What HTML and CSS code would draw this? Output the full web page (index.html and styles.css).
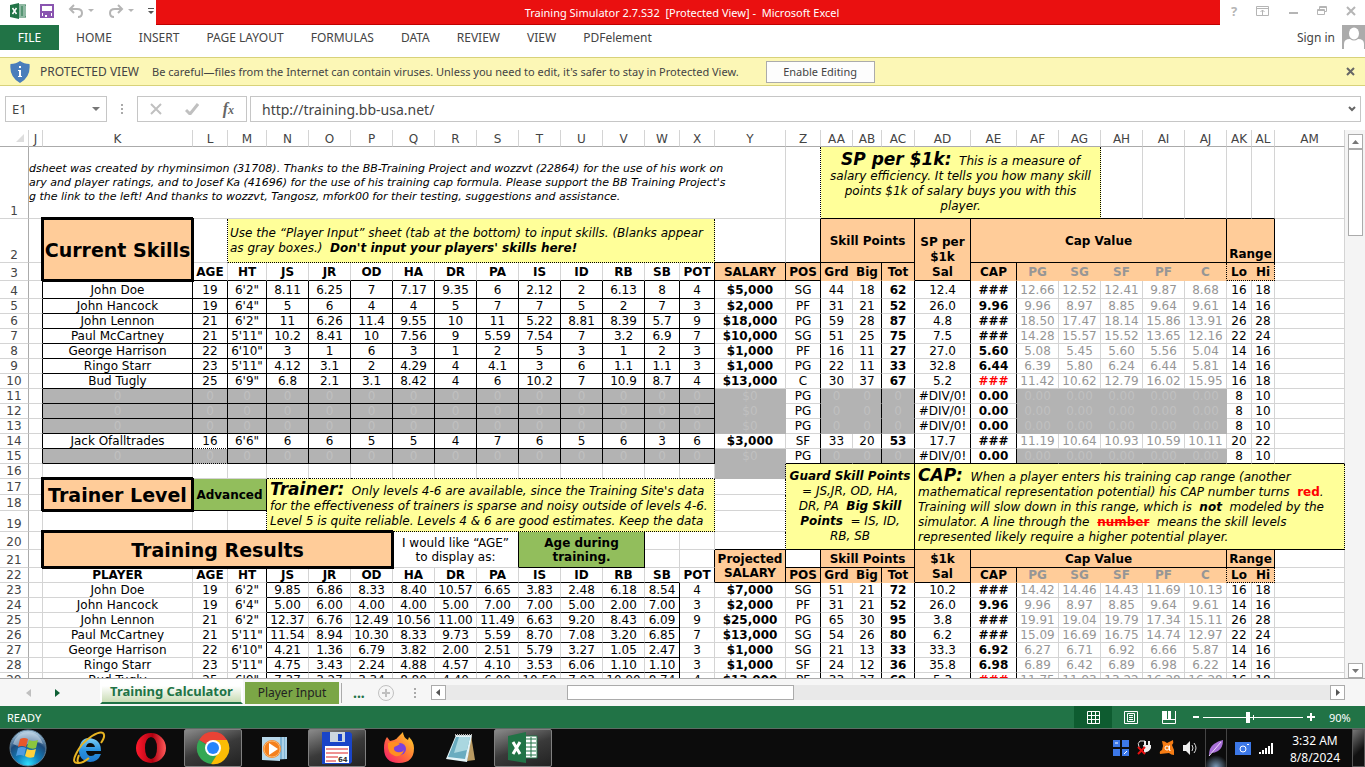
FILE: index.html
```html
<!DOCTYPE html>
<html lang="en">
<head>
    <meta charset="utf-8">
    <title>Training Simulator 2.7.S32 [Protected View] - Microsoft Excel</title>
    <link rel="stylesheet" href="styles.css">
</head>
<body>
<header class="title_bar">
    <div class="quick_access">
        <svg class="app_icon" width="16" height="16" viewBox="0 0 16 16"><path d="M8 2h8v12H8z" fill="#fff" stroke="#217346"/><path d="M9 4h6M9 6h6M9 8h6M9 10h6M9 12h6M12 3v10" stroke="#217346"/><path d="M0 2l9-2v16l-9-2z" fill="#217346"/><path d="M2.500 5l4 6M6.500 5l-4 6" stroke="#fff" stroke-width="1.500"/></svg>
        <button type="button" aria-label="Save"><svg width="14" height="14" viewBox="0 0 14 14"><path d="M1 1h12v12H1z" fill="none" stroke="#8a55b0" stroke-width="2"/><path d="M2 7h10v2H2zM3 9h8v4H3z" fill="#8a55b0"/><path d="M5 11h2v2H5z" fill="#fff"/></svg></button>
        <button type="button" class="undo" aria-label="Undo"><svg width="26" height="14" viewBox="0 0 26 14"><path d="M6 1L2 5l4 4M2 5h7q5 0 5 4t-4 4" fill="none" stroke="#b5b5b5" stroke-width="2"/><path d="M20 5h6l-3 3z" fill="#b5b5b5"/></svg></button>
        <button type="button" class="redo" aria-label="Redo"><svg width="26" height="14" viewBox="0 0 26 14"><path d="M10 1l4 4-4 4M14 5H7q-5 0-5 4t4 4" fill="none" stroke="#b5b5b5" stroke-width="2"/><path d="M20 5h6l-3 3z" fill="#b5b5b5"/></svg></button>
        <button type="button" class="customize" aria-label="Customize toolbar"><svg width="6" height="8" viewBox="0 0 6 8"><path d="M0 1h6v1H0zM0 4h6L3 7z" fill="#555"/></svg></button>
    </div>
    <div class="title">Training Simulator 2.7.S32&nbsp; [Protected View] -&nbsp; Microsoft Excel</div>
    <div class="window_buttons">
        <button type="button">?</button>
        <button type="button" aria-label="Ribbon display options"><svg width="13" height="10" viewBox="0 0 13 10"><path d="M.5.5h12v9H.5zM1 2.500h11M6.500 9V4M4.500 6l2-2 2 2" fill="none" stroke="#b5b5b5"/></svg></button>
        <button type="button" aria-label="Minimize"><svg width="9" height="10" viewBox="0 0 9 10"><path d="M0 6h9v2H0z" fill="#b5b5b5"/></svg></button>
        <button type="button" aria-label="Restore"><svg width="10" height="10" viewBox="0 0 10 10"><path d="M2.500 3V.5h7v5H8M.5 3.500h7v5h-7zM.5 4.500h7M3 1.500h6" fill="none" stroke="#b5b5b5"/></svg></button>
        <button type="button" aria-label="Close"><svg width="10" height="10" viewBox="0 0 10 10"><path d="M1 1l8 8M9 1L1 9" stroke="#b5b5b5" stroke-width="2"/></svg></button>
    </div>
</header>

<nav class="ribbon">
    <a class="file" href="#file">FILE</a>
    <a href="#home">HOME</a>
    <a href="#insert">INSERT</a>
    <a href="#layout">PAGE LAYOUT</a>
    <a href="#formulas">FORMULAS</a>
    <a href="#data">DATA</a>
    <a href="#review">REVIEW</a>
    <a href="#view">VIEW</a>
    <a href="#pdf">PDFelement</a>
    <a class="sign_in" href="#signin">Sign in</a>
    <svg class="avatar" width="23" height="24" viewBox="0 0 23 24"><path d="M0 0h23v24H0z" fill="#ababab"/><ellipse cx="12" cy="8.500" rx="5" ry="6" fill="#fff"/><path d="M2 24v-5q0-5 6-5 4 3 8 0 6 0 6 5v5z" fill="#fff"/></svg>
</nav>

<div class="protected_bar">
    <svg width="20" height="22" viewBox="0 0 20 22"><path d="M10 0q4 3 9.500 3Q21 16 10 22-1 16 .5 3 6 3 10 0z" fill="#4a7ebb"/><path d="M9 5h2v2H9zM8 9h3v6h1v1H8v-1h1v-5H8z" fill="#fff"/></svg>
    <span class="protected_label">PROTECTED VIEW</span>
    <span class="protected_text">Be careful—files from the Internet can contain viruses. Unless you need to edit, it's safer to stay in Protected View.</span>
    <button type="button" class="enable">Enable Editing</button>
    <button type="button" class="dismiss" aria-label="Close message"><svg width="9" height="9" viewBox="0 0 9 9"><path d="M1 1l7 7M8 1L1 8" stroke="#666" stroke-width="2"/></svg></button>
</div>

<div class="formula_row">
    <div class="name_box">
        <input type="text" value="E1" aria-label="Name box">
        <button type="button" aria-label="Show names"><svg width="8" height="4" viewBox="0 0 8 4"><path d="M0 0h8L4 4z" fill="#777"/></svg></button>
    </div>
    <svg class="dots" width="3" height="12" viewBox="0 0 3 12"><path d="M0 1h2v2H0zM0 5h2v2H0zM0 9h2v2H0z" fill="#aaa"/></svg>
    <div class="formula_buttons">
        <button type="button" aria-label="Cancel"><svg width="12" height="12" viewBox="0 0 12 12"><path d="M1 1l10 10M11 1L1 11" stroke="#c0c0c0" stroke-width="2"/></svg></button>
        <button type="button" aria-label="Enter"><svg width="14" height="12" viewBox="0 0 14 12"><path d="M1 7l4 4 8-10" fill="none" stroke="#c0c0c0" stroke-width="3"/></svg></button>
        <button type="button" class="fx" aria-label="Insert function"><i>f</i><i class="fx_x">x</i></button>
    </div>
    <div class="formula_box">
        <input type="text" value="http://training.bb-usa.net/" aria-label="Formula bar">
        <button type="button" aria-label="Expand formula bar"><svg width="8" height="6" viewBox="0 0 8 6"><path d="M1 1l3 3 3-3" fill="none" stroke="#666" stroke-width="2"/></svg></button>
    </div>
</div>

<main class="sheet_area">
<div class="sheet">
<table class="sheet_table">
    <colgroup>
        <col class="c29"><col class="c14"><col class="c150"><col class="c35"><col class="c39">
        <col class="c42"><col class="c42"><col class="c42"><col class="c42"><col class="c42"><col class="c42"><col class="c42"><col class="c42"><col class="c42">
        <col class="c35"><col class="c35"><col class="c71"><col class="c35"><col class="c32"><col class="c29"><col class="c33"><col class="c56"><col class="c46">
        <col class="c42"><col class="c42"><col class="c42"><col class="c42"><col class="c42"><col class="c25"><col class="c23"><col>
    </colgroup>
    <tr class="letters"><th><svg width="8" height="8" viewBox="0 0 8 8"><path d="M8 0v8H0z" fill="#ddd"/></svg></th><th>J</th><th>K</th><th>L</th><th>M</th><th>N</th><th>O</th><th>P</th><th>Q</th><th>R</th><th>S</th><th>T</th><th>U</th><th>V</th><th>W</th><th>X</th><th>Y</th><th>Z</th><th>AA</th><th>AB</th><th>AC</th><th>AD</th><th>AE</th><th>AF</th><th>AG</th><th>AH</th><th>AI</th><th>AJ</th><th>AK</th><th>AL</th><th>AM</th></tr>
    <tr class="r1"><th>1</th>
        <td colspan="16" class="credits">dsheet was created by rhyminsimon (31708). Thanks to the BB-Training Project and wozzvt (22864) for the use of his work on<br>ary and player ratings, and to Josef Ka (41696) for the use of his training cap formula. Please support the BB Training Project's<br>g the link to the left! And thanks to wozzvt, Tangosz, mfork00 for their testing, suggestions and assistance.</td>
        <td class="dot_right"></td>
        <td colspan="7" class="note sp_note"><b>SP per $1k:</b>&nbsp; This is a measure of salary efficiency. It tells you how many skill points $1k of salary buys you with this player.</td>
        <td class="line_bottom"></td><td class="line_bottom"></td><td class="line_bottom"></td><td class="line_bottom"></td><td class="line_bottom"></td><td></td></tr>
    <tr class="r2"><th>2</th><td></td>
        <td rowspan="2" class="thick">Current Skills</td><td class="dot_right"></td>
        <td colspan="12" class="note input_note">Use the “Player Input” sheet (tab at the bottom) to input skills. (Blanks appear as gray boxes.)&nbsp; <b>Don't input your players' skills here!</b></td>
        <td class="line_bottom"></td><td class="line_right line_bottom"></td>
        <td colspan="3" class="head boxed">Skill Points</td>
        <td rowspan="2" class="head boxed low salary_head">SP per $1k Sal</td>
        <td colspan="6" class="head boxed">Cap Value</td>
        <td colspan="2" class="head boxed low">Range</td><td></td></tr>
    <tr class="r3 names"><th>3</th><td></td><td>AGE</td><td>HT</td><td>JS</td><td>JR</td><td>OD</td><td>HA</td><td>DR</td><td>PA</td><td>IS</td><td>ID</td><td>RB</td><td>SB</td><td class="line_right">POT</td><td class="head boxed">SALARY</td><td class="head boxed">POS</td><td class="head">Grd</td><td class="head line_right">Big</td><td class="head line_right">Tot</td><td class="head line_right">CAP</td><td class="head dim">PG</td><td class="head dim">SG</td><td class="head dim">SF</td><td class="head dim">PF</td><td class="head dim dot_right">C</td><td class="head dot_bottom">Lo</td><td class="head dot_bottom dot_right">Hi</td><td></td></tr>
    <tr class="skills r4"><th>4</th><td></td><td>John Doe</td><td>19</td><td>6'2"</td><td>8.11</td><td>6.25</td><td>7</td><td>7.17</td><td>9.35</td><td>6</td><td>2.12</td><td>2</td><td>6.13</td><td>8</td><td>4</td><td>$5,000</td><td>SG</td><td>44</td><td>18</td><td>62</td><td>12.4</td><td>###</td><td>12.66</td><td>12.52</td><td>12.41</td><td>9.87</td><td>8.68</td><td>16</td><td>18</td><td></td></tr>
    <tr class="skills"><th>5</th><td></td><td>John Hancock</td><td>19</td><td>6'4"</td><td>5</td><td>6</td><td>4</td><td>4</td><td>5</td><td>7</td><td>7</td><td>5</td><td>2</td><td>7</td><td>3</td><td>$2,000</td><td>PF</td><td>31</td><td>21</td><td>52</td><td>26.0</td><td>9.96</td><td>9.96</td><td>8.97</td><td>8.85</td><td>9.64</td><td>9.61</td><td>14</td><td>16</td><td></td></tr>
    <tr class="skills"><th>6</th><td></td><td>John Lennon</td><td>21</td><td>6'2"</td><td>11</td><td>6.26</td><td>11.4</td><td>9.55</td><td>10</td><td>11</td><td>5.22</td><td>8.81</td><td>8.39</td><td>5.7</td><td>9</td><td>$18,000</td><td>PG</td><td>59</td><td>28</td><td>87</td><td>4.8</td><td>###</td><td>18.50</td><td>17.47</td><td>18.14</td><td>15.86</td><td>13.91</td><td>26</td><td>28</td><td></td></tr>
    <tr class="skills"><th>7</th><td></td><td>Paul McCartney</td><td>21</td><td>5'11"</td><td>10.2</td><td>8.41</td><td>10</td><td>7.56</td><td>9</td><td>5.59</td><td>7.54</td><td>7</td><td>3.2</td><td>6.9</td><td>7</td><td>$10,000</td><td>SG</td><td>51</td><td>25</td><td>75</td><td>7.5</td><td>###</td><td>14.28</td><td>15.57</td><td>15.52</td><td>13.65</td><td>12.16</td><td>22</td><td>24</td><td></td></tr>
    <tr class="skills"><th>8</th><td></td><td>George Harrison</td><td>22</td><td>6'10"</td><td>3</td><td>1</td><td>6</td><td>3</td><td>1</td><td>2</td><td>5</td><td>3</td><td>1</td><td>2</td><td>3</td><td>$1,000</td><td>PF</td><td>16</td><td>11</td><td>27</td><td>27.0</td><td>5.60</td><td>5.08</td><td>5.45</td><td>5.60</td><td>5.56</td><td>5.04</td><td>14</td><td>16</td><td></td></tr>
    <tr class="skills"><th>9</th><td></td><td>Ringo Starr</td><td>23</td><td>5'11"</td><td>4.12</td><td>3.1</td><td>2</td><td>4.29</td><td>4</td><td>4.1</td><td>3</td><td>6</td><td>1.1</td><td>1.1</td><td>3</td><td>$1,000</td><td>PG</td><td>22</td><td>11</td><td>33</td><td>32.8</td><td>6.44</td><td>6.39</td><td>5.80</td><td>6.24</td><td>6.44</td><td>5.81</td><td>14</td><td>16</td><td></td></tr>
    <tr class="skills"><th>10</th><td></td><td>Bud Tugly</td><td>25</td><td>6'9"</td><td>6.8</td><td>2.1</td><td>3.1</td><td>8.42</td><td>4</td><td>6</td><td>10.2</td><td>7</td><td>10.9</td><td>8.7</td><td>4</td><td>$13,000</td><td>C</td><td>30</td><td>37</td><td>67</td><td>5.2</td><td class="red">###</td><td>11.42</td><td>10.62</td><td>12.79</td><td>16.02</td><td>15.95</td><td>16</td><td>18</td><td></td></tr>
    <tr class="skills blank"><th>11</th><td></td><td>0</td><td>0</td><td>0</td><td>0</td><td>0</td><td>0</td><td>0</td><td>0</td><td>0</td><td>0</td><td>0</td><td>0</td><td>0</td><td>0</td><td>$0</td><td>PG</td><td>0</td><td>0</td><td>0</td><td>#DIV/0!</td><td>0.00</td><td>0.00</td><td>0.00</td><td>0.00</td><td>0.00</td><td>0.00</td><td>8</td><td>10</td><td></td></tr>
    <tr class="skills blank"><th>12</th><td></td><td>0</td><td>0</td><td>0</td><td>0</td><td>0</td><td>0</td><td>0</td><td>0</td><td>0</td><td>0</td><td>0</td><td>0</td><td>0</td><td>0</td><td>$0</td><td>PG</td><td>0</td><td>0</td><td>0</td><td>#DIV/0!</td><td>0.00</td><td>0.00</td><td>0.00</td><td>0.00</td><td>0.00</td><td>0.00</td><td>8</td><td>10</td><td></td></tr>
    <tr class="skills blank"><th>13</th><td></td><td>0</td><td>0</td><td>0</td><td>0</td><td>0</td><td>0</td><td>0</td><td>0</td><td>0</td><td>0</td><td>0</td><td>0</td><td>0</td><td>0</td><td>$0</td><td>PG</td><td>0</td><td>0</td><td>0</td><td>#DIV/0!</td><td>0.00</td><td>0.00</td><td>0.00</td><td>0.00</td><td>0.00</td><td>0.00</td><td>8</td><td>10</td><td></td></tr>
    <tr class="skills age_dots"><th>14</th><td></td><td>Jack Ofalltrades</td><td>16</td><td>6'6"</td><td>6</td><td>6</td><td>5</td><td>5</td><td>4</td><td>7</td><td>6</td><td>5</td><td>6</td><td>3</td><td>6</td><td>$3,000</td><td>SF</td><td>33</td><td>20</td><td>53</td><td>17.7</td><td>###</td><td>11.19</td><td>10.64</td><td>10.93</td><td>10.59</td><td>10.11</td><td>20</td><td>22</td><td></td></tr>
    <tr class="skills blank age_dots last"><th>15</th><td></td><td>0</td><td>0</td><td>0</td><td>0</td><td>0</td><td>0</td><td>0</td><td>0</td><td>0</td><td>0</td><td>0</td><td>0</td><td>0</td><td>0</td><td>$0</td><td>PG</td><td>0</td><td>0</td><td>0</td><td>#DIV/0!</td><td>0.00</td><td>0.00</td><td>0.00</td><td>0.00</td><td>0.00</td><td>0.00</td><td>8</td><td>10</td><td></td></tr>
    <tr class="r16"><th>16</th><td></td><td></td><td></td><td></td><td class="dot_bottom"></td><td class="dot_bottom"></td><td class="dot_bottom"></td><td class="dot_bottom"></td><td class="dot_bottom"></td><td class="dot_bottom"></td><td class="dot_bottom"></td><td class="dot_bottom"></td><td class="dot_bottom"></td><td class="dot_bottom"></td><td class="dot_bottom"></td><td class="gray_cell"></td>
        <td rowspan="5" colspan="4" class="note points_note"><b>Guard Skill Points</b><br>= JS,JR, OD, HA,<br>DR, PA&nbsp; <b>Big Skill<br>Points</b>&nbsp; = IS, ID,<br>RB, SB</td>
        <td rowspan="5" colspan="10" class="note cap_note"><b class="lead">CAP:</b>&nbsp; When a player enters his training cap range (another mathematical representation potential) his CAP number turns&nbsp; <em>red</em>. Training will slow down in this range, which is&nbsp; <b>not</b>&nbsp; modeled by the simulator. A line through the&nbsp; <em class="struck">number</em>&nbsp; means the skill levels represented likely require a higher potential player.</td></tr>
    <tr class="r17"><th>17</th><td></td><td rowspan="2" class="thick">Trainer Level</td>
        <td rowspan="2" colspan="2" class="green boxed">Advanced</td>
        <td rowspan="3" colspan="11" class="note trainer_note"><b>Trainer:</b>&nbsp; Only levels 4-6 are available, since the Training Site's data<br>for the effectiveness of trainers is sparse and noisy outside of levels 4-6.<br>Level 5 is quite reliable. Levels 4 &amp; 6 are good estimates. Keep the data</td><td class="dot_right"></td></tr>
    <tr class="r17"><th>18</th><td></td><td class="dot_right"></td></tr>
    <tr class="r19"><th>19</th><td></td><td></td><td></td><td class="dot_right"></td><td class="dot_right"></td></tr>
    <tr class="r20"><th>20</th><td></td><td rowspan="2" colspan="6" class="thick">Training Results</td>
        <td rowspan="2" colspan="3" class="line_right">I would like “AGE”<br>to display as:</td>
        <td rowspan="2" colspan="3" class="green boxed">Age during<br>training.</td><td></td><td></td><td class="line_bottom dot_right"></td></tr>
    <tr class="r20"><th>21</th><td></td><td></td><td class="line_right"></td><td rowspan="2" class="head boxed">Projected SALARY</td><td class="line_right line_bottom"></td>
        <td colspan="3" class="head boxed">Skill Points</td>
        <td rowspan="2" class="head boxed"><div class="clipped">SP per $1k Sal</div></td>
        <td colspan="6" class="head boxed">Cap Value</td><td colspan="2" class="head boxed">Range</td><td></td></tr>
    <tr class="names r22"><th>22</th><td></td><td>PLAYER</td><td>AGE</td><td>HT</td><td class="line_bottom">JS</td><td class="line_bottom">JR</td><td class="line_bottom">OD</td><td class="line_bottom">HA</td><td class="line_bottom">DR</td><td class="line_bottom">PA</td><td class="line_bottom">IS</td><td class="line_bottom">ID</td><td class="line_bottom">RB</td><td class="line_bottom">SB</td><td class="line_right">POT</td><td class="head boxed">POS</td><td class="head">Grd</td><td class="head line_right">Big</td><td class="head line_right">Tot</td><td class="head line_right">CAP</td><td class="head dim">PG</td><td class="head dim">SG</td><td class="head dim">SF</td><td class="head dim">PF</td><td class="head dim dot_right">C</td><td class="head dot_bottom">Lo</td><td class="head dot_bottom dot_right">Hi</td><td></td></tr>
    <tr class="results"><th>23</th><td></td><td>John Doe</td><td>19</td><td>6'2"</td><td>9.85</td><td>6.86</td><td>8.33</td><td>8.40</td><td>10.57</td><td>6.65</td><td>3.83</td><td>2.48</td><td>6.18</td><td>8.54</td><td>4</td><td>$7,000</td><td>SG</td><td>51</td><td>21</td><td>72</td><td>10.2</td><td>###</td><td>14.42</td><td>14.46</td><td>14.43</td><td>11.69</td><td>10.13</td><td>16</td><td>18</td><td></td></tr>
    <tr class="results"><th>24</th><td></td><td>John Hancock</td><td>19</td><td>6'4"</td><td>5.00</td><td>6.00</td><td>4.00</td><td>4.00</td><td>5.00</td><td>7.00</td><td>7.00</td><td>5.00</td><td>2.00</td><td>7.00</td><td>3</td><td>$2,000</td><td>PF</td><td>31</td><td>21</td><td>52</td><td>26.0</td><td>9.96</td><td>9.96</td><td>8.97</td><td>8.85</td><td>9.64</td><td>9.61</td><td>14</td><td>16</td><td></td></tr>
    <tr class="results"><th>25</th><td></td><td>John Lennon</td><td>21</td><td>6'2"</td><td>12.37</td><td>6.76</td><td>12.49</td><td>10.56</td><td>11.00</td><td>11.49</td><td>6.63</td><td>9.20</td><td>8.43</td><td>6.09</td><td>9</td><td>$25,000</td><td>PG</td><td>65</td><td>30</td><td>95</td><td>3.8</td><td>###</td><td>19.91</td><td>19.04</td><td>19.79</td><td>17.34</td><td>15.11</td><td>26</td><td>28</td><td></td></tr>
    <tr class="results"><th>26</th><td></td><td>Paul McCartney</td><td>21</td><td>5'11"</td><td>11.54</td><td>8.94</td><td>10.30</td><td>8.33</td><td>9.73</td><td>5.59</td><td>8.70</td><td>7.08</td><td>3.20</td><td>6.85</td><td>7</td><td>$13,000</td><td>SG</td><td>54</td><td>26</td><td>80</td><td>6.2</td><td>###</td><td>15.09</td><td>16.69</td><td>16.75</td><td>14.74</td><td>12.97</td><td>22</td><td>24</td><td></td></tr>
    <tr class="results"><th>27</th><td></td><td>George Harrison</td><td>22</td><td>6'10"</td><td>4.21</td><td>1.36</td><td>6.79</td><td>3.82</td><td>2.00</td><td>2.51</td><td>5.79</td><td>3.27</td><td>1.05</td><td>2.47</td><td>3</td><td>$1,000</td><td>SG</td><td>21</td><td>13</td><td>33</td><td>33.3</td><td>6.92</td><td>6.27</td><td>6.71</td><td>6.92</td><td>6.66</td><td>5.87</td><td>14</td><td>16</td><td></td></tr>
    <tr class="results"><th>28</th><td></td><td>Ringo Starr</td><td>23</td><td>5'11"</td><td>4.75</td><td>3.43</td><td>2.24</td><td>4.88</td><td>4.57</td><td>4.10</td><td>3.53</td><td>6.06</td><td>1.10</td><td>1.10</td><td>3</td><td>$1,000</td><td>SF</td><td>24</td><td>12</td><td>36</td><td>35.8</td><td>6.98</td><td>6.89</td><td>6.42</td><td>6.89</td><td>6.98</td><td>6.22</td><td>14</td><td>16</td><td></td></tr>
    <tr class="results"><th>29</th><td></td><td>Bud Tugly</td><td>25</td><td>6'9"</td><td>7.37</td><td>3.27</td><td>3.34</td><td>8.80</td><td>4.40</td><td>6.00</td><td>10.50</td><td>7.03</td><td>10.90</td><td>8.74</td><td>4</td><td>$13,000</td><td>PF</td><td>33</td><td>37</td><td>69</td><td>5.3</td><td class="red">###</td><td>11.75</td><td>11.93</td><td>13.22</td><td>16.28</td><td>16.28</td><td>16</td><td>18</td><td></td></tr>
</table>
</div>
<div class="scroll_v">
    <button type="button" aria-label="Scroll up"><svg width="7" height="4" viewBox="0 0 7 4"><path d="M3.500 0L7 4H0z" fill="#777"/></svg></button>
    <div class="thumb_v"></div>
    <button type="button" aria-label="Scroll down"><svg width="7" height="4" viewBox="0 0 7 4"><path d="M0 0h7L3.500 4z" fill="#777"/></svg></button>
</div>
</main>

<div class="tab_bar">
    <div class="tab_arrows">
        <button type="button" aria-label="Previous sheet"><svg width="5" height="8" viewBox="0 0 5 8"><path d="M5 0v8L0 4z" fill="#c0c0c0"/></svg></button>
        <button type="button" aria-label="Next sheet"><svg width="5" height="8" viewBox="0 0 5 8"><path d="M0 0l5 4-5 4z" fill="#0e6035"/></svg></button>
    </div>
    <a class="tab active" href="#calc">Training Calculator</a>
    <a class="tab input_tab" href="#input">Player Input</a>
    <button type="button" class="more">...</button>
    <button type="button" class="add" aria-label="New sheet"><svg width="16" height="16" viewBox="0 0 16 16"><circle cx="8" cy="8" r="7.500" fill="none" stroke="#c0c0c0"/><path d="M8 4v8M4 8h8" stroke="#c0c0c0" stroke-width="2"/></svg></button>
    <svg class="dots" width="3" height="12" viewBox="0 0 3 12"><path d="M0 1h2v2H0zM0 5h2v2H0zM0 9h2v2H0z" fill="#aaa"/></svg>
    <div class="scroll_h">
        <button type="button" aria-label="Scroll left"><svg width="4" height="7" viewBox="0 0 4 7"><path d="M4 0v7L0 3.500z" fill="#555"/></svg></button>
        <div class="track_h"><div class="thumb_h"></div></div>
        <button type="button" aria-label="Scroll right"><svg width="4" height="7" viewBox="0 0 4 7"><path d="M0 0l4 3.500L0 7z" fill="#555"/></svg></button>
    </div>
</div>

<div class="status_bar">
    <span class="ready">READY</span>
    <button type="button" class="view_on" aria-label="Normal view"><svg width="13" height="13" viewBox="0 0 13 13"><path d="M.5.500h12v12H.5zM4.500 0v13M8.500 0v13M0 4.500h13M0 8.500h13" fill="none" stroke="#fff"/></svg></button>
    <button type="button" aria-label="Page layout view"><svg width="14" height="13" viewBox="0 0 14 13"><path d="M.5.500h13v12H.5zM3.500 2.500h7v8h-7zM5 4.500h4M5 6.500h4M5 8.500h4" fill="none" stroke="#fff"/></svg></button>
    <button type="button" aria-label="Page break view"><svg width="14" height="13" viewBox="0 0 14 13"><path d="M.5 0v12.500h13V0M0 8.500h14" fill="none" stroke="#fff"/><path d="M1 0h4v8H1zM6 0h3v8H6z" fill="#fff"/></svg></button>
    <button type="button" class="zoom_step" aria-label="Zoom out"><svg width="6" height="8" viewBox="0 0 6 8"><path d="M0 3h6v2H0z" fill="#fff"/></svg></button>
    <input class="zoom" type="range" min="0" max="100" value="45" aria-label="Zoom">
    <button type="button" class="zoom_step" aria-label="Zoom in"><svg width="8" height="8" viewBox="0 0 8 8"><path d="M0 3h8v2H0zM3 0h2v8H3z" fill="#fff"/></svg></button>
    <span class="percent">90%</span>
</div>

<footer class="taskbar">
    <button type="button" class="start" aria-label="Start"><svg width="38" height="38" viewBox="0 0 38 38"><defs><radialGradient id="orb" cx=".5" cy=".95" r=".9"><stop offset="0" stop-color="#2fe0ff"/><stop offset=".35" stop-color="#1181bd"/><stop offset=".7" stop-color="#1d4a7a"/><stop offset="1" stop-color="#a9c7dd"/></radialGradient></defs><circle cx="19" cy="19" r="18" fill="url(#orb)" stroke="#5f7f98"/><path d="M4 15Q8 3 19 3t15 12q-7-4-15 0T4 15z" fill="#cfe0ec" opacity=".55"/><path d="M11 10q4-2 8 0l-2 8q-4-2-8 0z" fill="#e8582a"/><path d="M20 11q4 2 9 0l-2 8q-4 2-9-1z" fill="#8cc63e"/><path d="M9 19q4-2 8 0l-2 8q-4-2-8 0z" fill="#4f9be0"/><path d="M18 20q4 2 9 0l-2 8q-5 2-9-1z" fill="#ffd23c"/></svg></button>
    <button type="button" aria-label="Internet Explorer"><svg width="34" height="34" viewBox="0 0 34 34"><defs><linearGradient id="ie" x1="0" y1="0" x2="0" y2="1"><stop offset="0" stop-color="#7fd0f7"/><stop offset=".5" stop-color="#2a93e0"/><stop offset="1" stop-color="#1e78cf"/></linearGradient></defs><path d="M17 7q12 1 12 13H14q1 5 5 5 3 0 4-2h6q-3 8-11 8Q7 30 7 19 8 7 17 7zM14 16h9q-1-4-5-4-3 0-4 4z" fill="url(#ie)" fill-rule="evenodd"/><path d="M7 24Q4 31 7 32q4 0 10-5M7 32Q-1 33 4 23 9 12 20 5 28 0 31 2q3 3-2 10" fill="none" stroke="#e8b422" stroke-width="2"/></svg></button>
    <button type="button" aria-label="Opera"><svg width="32" height="32" viewBox="0 0 32 32"><defs><linearGradient id="opera"><stop offset="0" stop-color="#ff1b2d"/><stop offset=".55" stop-color="#b00010"/><stop offset="1" stop-color="#ff5a5a"/></linearGradient></defs><path d="M16 1a15 15 0 1 0 0 30 15 15 0 0 0 0-30zm0 4q6 1 6 11t-6 11q-6-1-6-11t6-11z" fill="url(#opera)" fill-rule="evenodd"/></svg></button>
    <button type="button" class="open" aria-label="Chrome"><svg width="34" height="34" viewBox="0 0 34 34"><path d="M17 17L3 9a16 16 0 0 1 28 0z" fill="#ea4335"/><path d="M17 17h-1L3 9a16 16 0 0 0 12 24l9-12z" fill="#34a853"/><path d="M17 9h14a16 16 0 0 1-16 24l9-14z" fill="#fbbc05"/><circle cx="17" cy="17" r="8" fill="#fff"/><circle cx="17" cy="17" r="6" fill="#2684fc"/></svg></button>
    <button type="button" aria-label="Media Player"><svg width="28" height="28" viewBox="0 0 28 28"><path d="M9 3h17v22l-17 1z" fill="#7fb4d4"/><path d="M22 3v22M25 3v22" stroke="#d8eefa"/><path d="M1 3h18v24L1 26z" fill="#b8d8ea"/><circle cx="11" cy="15" r="9" fill="#f4801e"/><circle cx="11" cy="15" r="8" fill="none" stroke="#fbb870"/><path d="M8 9l9 6-9 6z" fill="#fff"/></svg></button>
    <button type="button" class="open" aria-label="Total Commander"><svg width="32" height="32" viewBox="0 0 32 32"><path d="M1 0h28l2 2v28l-2 2H1z" fill="#1a45c8"/><path d="M9 0h15v10H9z" fill="#ccd6e0"/><path d="M17 2h4v7h-4z" fill="#1a45c8"/><path d="M4 14h24v17H4z" fill="#fff"/><path d="M5 17h22M5 21h22M5 25h22M5 29h10" stroke="#d22"/><path d="M17 24h11v7H17z" fill="#fff"/><text x="17" y="30" class="disk_text">64</text></svg></button>
    <button type="button" aria-label="Firefox"><svg width="32" height="32" viewBox="0 0 32 32"><defs><linearGradient id="fox" x1="1" y1="0" x2="0" y2="1"><stop offset="0" stop-color="#ffe226"/><stop offset=".5" stop-color="#ff7139"/><stop offset="1" stop-color="#f5136f"/></linearGradient></defs><path d="M1 16Q1 9 4 5l3 4 4-1q3-1 4-3l5-5q0 5 5 8l1-3q5 5 5 11 0 15-15 15Q1 31 1 16z" fill="url(#fox)"/><circle cx="17" cy="17" r="6" fill="#7a42dd"/><path d="M5 11q7-3 12 1-3 2-6 3-1 4 3 5 5 1 7-2-2 7-9 6-8-2-7-13z" fill="#ff8e21"/></svg></button>
    <button type="button" aria-label="Notepad"><svg width="32" height="32" viewBox="0 0 32 32"><path d="M26 3l4 25-8 1z" fill="#b99a62"/><path d="M11 3h16l-5 27-21-3z" fill="#e4f4f8"/><path d="M11 5h14l-5 22-17-2z" fill="#69acc0"/><path d="M14 5h11l-3 13-13 3z" fill="#aad7e0"/><path d="M10 3h17" stroke="#bbb" stroke-width="2" stroke-dasharray="1 1"/></svg></button>
    <button type="button" class="open" aria-label="Excel"><svg width="32" height="32" viewBox="0 0 32 32"><path d="M18 4h12v22H18z" fill="#fff" stroke="#217346" stroke-width="1"/><path d="M18 7h11M18 11h11M18 15h11M18 19h11M18 23h11M24 5v20" stroke="#217346" stroke-width="1"/><path d="M1 4l18-4v31L1 28z" fill="#217346"/><path d="M6 10l7 12M13 10L6 22" stroke="#fff" stroke-width="3"/></svg></button>
    <div class="tray">
        <svg width="16" height="16" viewBox="0 0 16 16"><path d="M0 0h7v7H0zM9 0h7v7H9zM0 9h7v7H0zM9 9h7v7H9z" fill="#3c78e8"/><path d="M2 3h3M11 14l3-3" stroke="#fff"/></svg>
        <svg width="14" height="16" viewBox="0 0 14 16"><path d="M3 1h5M3 1Q0 3 2 7" fill="none" stroke="#ddd"/><path d="M6 5h8v3q-2 4-5 4l-2 2V9z" fill="#eee"/><path d="M8 1v4M12 1v4" stroke="#eee" stroke-width="2"/><path d="M1 7l7 7M8 7l-7 7" stroke="#e81010" stroke-width="2"/></svg>
        <svg width="16" height="16" viewBox="0 0 16 16"><path d="M3 1q3 0 5 2l6-3q1 3-1 5l2 5v5q-3 0-5-2l-9 1q-1-3 2-4L4 6z" fill="#f57c14"/><circle cx="8" cy="8" r="2" fill="none" stroke="#fff"/><path d="M10.500 5.500v5h1" fill="none" stroke="#fff"/></svg>
        <svg width="14" height="14" viewBox="0 0 14 14"><path d="M0 4h3l4-4v14l-4-4H0z" fill="#eee"/><path d="M9 4q2 3 0 6M11 2q4 5 0 10" fill="none" stroke="#ddd"/></svg>
        <div class="feather"><svg width="16" height="18" viewBox="0 0 16 18"><path d="M1 17q0-9 5-12 4-3 9-4 0 8-5 11-3 2-7 2z" fill="#a970d8"/><path d="M1 17L13 3" stroke="#ecd9fa"/></svg></div>
        <svg width="16" height="13" viewBox="0 0 16 13"><path d="M0 0h16v13H0z" fill="#3c78e8"/><circle cx="8" cy="7" r="3" fill="none" stroke="#fff" stroke-width="1"/><path d="M12 2h2v1h-2z" fill="#fff"/></svg>
        <svg width="14" height="11" viewBox="0 0 14 11"><path d="M0 9h2v2H0zM3 7h2v4H3zM6 5h2v6H6zM9 3h2v8H9zM12 0h2v11h-2z" fill="#fff"/></svg>
    </div>
    <div class="clock">3:32 AM<br>8/8/2024</div>
    <button type="button" class="desktop" aria-label="Show desktop"></button>
</footer>
</body>
</html>
```
FILE: styles.css
```css
* {
    box-sizing: border-box;
}

body {
    margin: 0;
    height: 100vh;
    display: flex;
    flex-direction: column;
    overflow: hidden;
    background-color: #fff;
    color: #444;
    font-family: "Segoe UI", "Noto Sans", "Open Sans", sans-serif;
    font-size: 12px;
}

button, input {
    font: inherit;
    color: inherit;
    border: 0;
    padding: 0;
    margin: 0;
    background: none;
}

button {
    display: flex;
    align-items: center;
    justify-content: center;
}

a {
    color: inherit;
    text-decoration: none;
}

svg {
    display: block;
    flex: none;
}

/* title bar */
.title_bar {
    display: flex;
    flex: none;
    height: 25px;
}

.quick_access {
    width: 156px;
    display: flex;
    align-items: center;
    padding: 0 3px 3px 10px;
}

.quick_access .app_icon {
    margin-right: 14px;
}

.undo, .redo, .customize {
    margin-left: 14px;
}

.title {
    flex: 1;
    padding-right: 12px;
    background-color: #ea1010;
    border-bottom: 1px solid #c00000;
    color: #fff;
    font-size: 11px;
    line-height: 25px;
    text-align: center;
    white-space: nowrap;
}

.window_buttons {
    width: 145px;
    display: flex;
    align-items: center;
    justify-content: space-between;
    padding: 0 9px 3px 11px;
    color: #b5b5b5;
    font-size: 13px;
    font-weight: bold;
}

/* ribbon */
.ribbon {
    display: flex;
    flex: none;
    height: 32px;
    line-height: 25px;
}

.ribbon a {
    margin-right: 27px;
    white-space: nowrap;
}

.ribbon .file {
    width: 59px;
    height: 25px;
    margin-right: 17px;
    background-color: #217346;
    color: #fff;
    text-align: center;
}

.ribbon .sign_in {
    margin-left: auto;
    margin-right: 7px;
}

.protected_bar {
    display: flex;
    flex: none;
    align-items: center;
    height: 29px;
    padding: 0 10px;
    background-color: #fcf7b6;
    border-top: 1px solid #d8d27a;
    border-bottom: 1px solid #d8d27a;
    font-size: 11px;
    white-space: nowrap;
}

.protected_label {
    margin: 0 13px 0 10px;
    font-size: 12px;
}

.enable {
    width: 109px;
    height: 22px;
    margin-left: 27px;
    background-color: #fdfdfd;
    border: 1px solid #ababab;
}

.dismiss {
    margin-left: auto;
}

/* formula bar */
.formula_row {
    display: flex;
    flex: none;
    height: 44px;
    padding: 10px 4px 8px 5px;
    font-size: 13px;
}

.name_box, .formula_buttons, .formula_box {
    display: flex;
    border: 1px solid #c6c6c6;
}

.name_box {
    width: 102px;
    padding: 0 6px;
}

.name_box input {
    flex: 1;
    min-width: 0;
}

.formula_row .dots {
    align-self: center;
    margin: 0 13px 0 14px;
}

.formula_buttons {
    width: 110px;
    align-items: center;
    justify-content: space-between;
    padding: 0 12px;
}

.fx {
    font-family: "Liberation Serif", serif;
    font-size: 16px;
    font-weight: bold;
    color: #666;
}

.fx_x {
    font-size: 12px;
    padding-top: 3px;
}

.formula_box {
    flex: 1;
    margin-left: 3px;
    padding: 0 4px 0 11px;
}

.formula_box input {
    flex: 1;
    font-size: 14px;
}

/* sheet */
.sheet_area {
    display: flex;
    flex: 1;
    min-height: 0;
    overflow: hidden;
    border-bottom: 1px solid #ababab;
}

.sheet {
    flex: 1;
    overflow: hidden;
}

.sheet_table {
    width: 100%;
    table-layout: fixed;
    border-collapse: separate;
    border-spacing: 0;
    font-family: Verdana, "DejaVu Sans", sans-serif;
    font-size: 12px;
    line-height: 14px;
    color: #000;
    text-align: center;
}

.c14 { width: 14px; }
.c23 { width: 23px; }
.c25 { width: 25px; }
.c29 { width: 29px; }
.c32 { width: 32px; }
.c33 { width: 33px; }
.c35 { width: 35px; }
.c39 { width: 39px; }
.c42 { width: 42px; }
.c46 { width: 46px; }
.c56 { width: 56px; }
.c71 { width: 71px; }
.c150 { width: 150px; }

.sheet_table td, .sheet_table th {
    height: 15px;
    padding: 0;
    border: 0 solid #d4d4d4;
    border-right-width: 1px;
    border-bottom-width: 1px;
    white-space: nowrap;
}

.sheet_table th {
    border-right-color: #ababab;
    color: #444;
    font-weight: normal;
    vertical-align: bottom;
}

.sheet_table .letters th {
    height: 17px;
    border-right-color: #d4d4d4;
    border-bottom-color: #ababab;
}

.letters svg {
    margin: 0 4px 4px auto;
}

.sheet_table tr.r1 td { height: 72px; }
.sheet_table tr.r2 td { height: 44px; }
.sheet_table tr.r3 td, .sheet_table tr.r4 td, .sheet_table tr.r20 td { height: 18px; }
.sheet_table tr.r17 td { height: 16px; }
.sheet_table tr.r19 td { height: 21px; }

.sheet_table .line_right { border-right-color: #000; }
.sheet_table .line_bottom { border-bottom-color: #000; }
.sheet_table .dot_right { border-right: 1px dotted #000; }
.sheet_table .dot_bottom { border-bottom: 1px dotted #000; }
.sheet_table .boxed { border-right-color: #000; border-bottom-color: #000; }

.sheet_table .credits {
    font-size: 11px;
    font-style: italic;
    text-align: left;
}

.sheet_table .note {
    background-color: #ffff99;
    border-right: 1px dotted #000;
    border-bottom: 1px dotted #000;
    font-style: italic;
    line-height: 15px;
    text-align: left;
    white-space: normal;
}

.sheet_table .sp_note {
    padding: 0 5px;
    border-bottom: 1px solid #000;
    text-align: center;
}

.sp_note b, .trainer_note b, .cap_note .lead {
    font-size: 17px;
}

.sheet_table .input_note {
    padding: 0 2px;
}

.sheet_table .points_note {
    padding: 0 2px;
    border-right: 1px solid #000;
    border-bottom: 1px solid #000;
    text-align: center;
}

.sheet_table .cap_note {
    padding: 0 3px;
    border-bottom: 1px solid #000;
}

.cap_note em {
    color: #f00;
    font-style: normal;
    font-weight: bold;
}

.cap_note .struck {
    text-decoration: line-through;
}

.sheet_table .trainer_note {
    padding: 0 3px;
    white-space: nowrap;
}

.sheet_table .thick {
    position: relative;
    background-color: #ffcc99;
    border: solid #000;
    border-width: 1px 2px 2px 1px;
    box-shadow: 0 0 0 1px #000, -1px -1px 0 1px #000;
    font-size: 19px;
    font-weight: bold;
    line-height: 22px;
}

.sheet_table .head {
    background-color: #ffcc99;
    font-weight: bold;
    white-space: normal;
}

.sheet_table .head:not(.boxed):not(.line_right):not(.dot_right) {
    border-right-color: #ffcc99;
}

.sheet_table .head:not(.boxed):not(.dot_bottom) {
    border-bottom-color: #ffcc99;
}

.sheet_table .low {
    vertical-align: bottom;
    line-height: 15px;
}

.sheet_table .salary_head {
    padding: 0 4px;
}

.sheet_table .dim {
    color: #969696;
}

.sheet_table .green {
    background-color: #92be5c;
    font-weight: bold;
}

.clipped {
    display: flex;
    align-items: flex-end;
    height: 31px;
    padding: 0 4px;
    overflow: hidden;
    line-height: 15px;
}

.names td {
    font-weight: bold;
}

.sheet_table tr.r3 td:nth-child(-n+15) {
    border-bottom-color: #000;
}

.sheet_table tr.r3 td:nth-child(2) {
    border-bottom-color: #d4d4d4;
}

/* player rows */
.sheet_table .skills td:nth-child(n+3):nth-child(-n+16) {
    border-color: #000;
}

.sheet_table .skills td:nth-child(2) {
    border-right-color: #000;
}

.sheet_table .results td:nth-child(n+6):nth-child(-n+15) {
    border-bottom-color: #000;
}

.sheet_table .results td:nth-child(5), .sheet_table .results td:nth-child(15),
.sheet_table .r22 td:nth-child(5) {
    border-right-color: #000;
}

.skills td:nth-child(17), .results td:nth-child(17),
.skills td:nth-child(21), .results td:nth-child(21),
.skills td:nth-child(23), .results td:nth-child(23) {
    font-weight: bold;
}

.sheet_table .skills td:nth-child(18), .sheet_table .results td:nth-child(18),
.sheet_table .skills td:nth-child(n+20):nth-child(-n+23),
.sheet_table .results td:nth-child(n+20):nth-child(-n+23) {
    border-right-color: #000;
}

.skills td:nth-child(n+24):nth-child(-n+28),
.results td:nth-child(n+24):nth-child(-n+28) {
    color: #969696;
}

.sheet_table .blank td:nth-child(n+3):nth-child(-n+17),
.sheet_table .blank td:nth-child(n+19):nth-child(-n+21),
.sheet_table .blank td:nth-child(n+24):nth-child(-n+28) {
    background-color: #b3b3b3;
    color: #c0c0c0;
    font-weight: normal;
}

.sheet_table .blank td:nth-child(17), .sheet_table .blank td:nth-child(19),
.sheet_table .blank td:nth-child(n+24):nth-child(-n+28) {
    border-color: #b3b3b3;
}

.sheet_table .blank td:nth-child(n+20):nth-child(-n+21) {
    border-bottom-color: #b3b3b3;
}

.sheet_table .age_dots td:nth-child(4) {
    border-bottom-style: dotted;
}

.sheet_table .last td:nth-child(n+18):nth-child(n+18) {
    border-bottom-color: #000;
}

.sheet_table .gray_cell {
    background-color: #b3b3b3;
    border-bottom-color: #b3b3b3;
    border-right: 1px dotted #000;
}

.sheet_table .red {
    color: #f00;
}

/* scroll bars */
.scroll_v {
    width: 20px;
    display: flex;
    flex-direction: column;
    padding: 4px 2px 0 3px;
    background-color: #f4f4f4;
}

.scroll_v button, .scroll_h button {
    width: 15px;
    height: 15px;
    background-color: #fff;
    border: 1px solid #ababab;
}

.thumb_v {
    height: 87px;
    margin-bottom: auto;
    background-color: #fff;
    border: 1px solid #ababab;
}

.tab_bar {
    display: flex;
    flex: none;
    align-items: center;
    height: 27px;
    padding-right: 20px;
    background-color: #f6f6f6;
}

.tab_arrows {
    width: 100px;
    display: flex;
    gap: 24px;
    padding-left: 26px;
}

.tab {
    height: 22px;
    line-height: 22px;
    font-size: 12px;
    text-align: center;
    white-space: nowrap;
}

.tab.active {
    width: 143px;
    height: 25px;
    margin: 0 2px 2px 0;
    background-image: linear-gradient(#fff 30%, #c9dcb4);
    border: 2px solid #fff;
    border-top: 0;
    border-bottom: 2px solid #217346;
    color: #217346;
    font-size: 13px;
    font-weight: bold;
    line-height: 24px;
}

.input_tab {
    width: 94px;
    background-color: #7ba646;
    color: #222;
}

.more {
    height: 20px;
    margin-left: 2px;
    padding-left: 11px;
    border-left: 1px solid #ababab;
    color: #217346;
    font-size: 14px;
    font-weight: bold;
}

.add {
    margin: 0 20px 0 13px;
}

.scroll_h {
    display: flex;
    flex: 1;
    margin-left: 14px;
}

.track_h {
    flex: 1;
    padding-left: 121px;
    background-color: #e9e9e9;
}

.thumb_h {
    width: 227px;
    height: 15px;
    background-color: #fff;
    border: 1px solid #ababab;
}

/* status bar */
.status_bar {
    display: flex;
    flex: none;
    height: 22px;
    align-items: center;
    background-color: #217346;
    color: #fff;
    font-size: 11px;
}

.ready {
    margin: 0 auto 0 7px;
}

.status_bar button {
    width: 38px;
    height: 22px;
}

.status_bar .view_on {
    background-color: #0e5c30;
}

.status_bar .zoom_step {
    width: 15px;
}

.zoom {
    width: 100px;
    height: 12px;
    appearance: none;
    background: linear-gradient(#fff, #fff) 0 6px / 100% 1px no-repeat, linear-gradient(#fff, #fff) 50% 4px / 1px 5px no-repeat;
}

.zoom::-webkit-slider-thumb {
    appearance: none;
    width: 4px;
    height: 11px;
    background-color: #fff;
}

.percent {
    width: 47px;
    padding-left: 11px;
}

/* taskbar */
.taskbar {
    display: flex;
    flex: none;
    align-items: stretch;
    gap: 4px;
    height: 39px;
    background-color: #0c0c0c;
    border-top: 1px solid #5c6b64;
}

.taskbar button {
    width: 58px;
}

.taskbar .start {
    width: 56px;
}

.taskbar .open {
    background-image: linear-gradient(160deg, #8a8a8a, #3a3a3a 50%, #222);
    border: 1px solid #808080;
    border-radius: 2px;
}

.disk_text {
    font: bold 7px "DejaVu Sans", sans-serif;
    fill: #333;
}

.tray {
    display: flex;
    align-items: center;
    gap: 8px;
    margin-left: auto;
    margin-right: 5px;
}

.feather {
    display: flex;
    align-items: center;
    align-self: stretch;
    padding: 0 2px;
    border: solid #444;
    border-width: 0 1px;
    background-image: radial-gradient(circle at 50% 100%, #7a9ab8, #0c0c0c 30%);
}

.clock {
    width: 66px;
    color: #fff;
    line-height: 17px;
    text-align: center;
    padding-top: 3px;
}

.taskbar .desktop {
    width: 13px;
    background-image: linear-gradient(135deg, #777, #111 60%);
    border: 1px solid #555;
}
```
